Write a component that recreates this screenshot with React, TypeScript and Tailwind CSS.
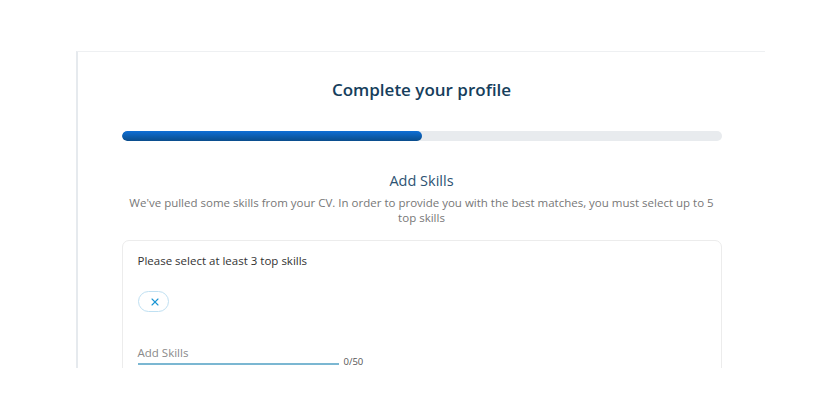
import { X } from "lucide-react";

export default function App() {
  return (
    <div className="h-[420px] w-[840px] bg-white pt-[51px] font-['Open_Sans',sans-serif]">
      <section className="ml-[76px] h-[317px] w-[689px] overflow-hidden border-l-2 border-t border-l-[#e6eaee] border-t-[#eef0f2]">
        <h1 className="m-0 mt-[26px] text-center text-[17px] font-semibold leading-6 text-[#163e5c]">
          Complete your profile
        </h1>

        <div className="mx-auto mt-[29px] h-[10px] w-[600px] overflow-hidden rounded-full bg-[#e8ebee]">
          <div className="h-full w-1/2 rounded-full bg-gradient-to-b from-[#0f6fd6] to-[#0a4d8c]" />
        </div>

        <h2 className="m-0 mt-[30px] text-center text-[14.5px] font-normal leading-5 text-[#2d5373]">
          Add Skills
        </h2>
        <p className="mx-auto m-0 mt-[4px] w-[600px] text-center text-[11.5px] leading-[15px] text-[#777]">
          We&apos;ve pulled some skills from your CV. In order to provide you with the best matches, you
          must select up to 5 top skills
        </p>

        <div className="mx-auto mt-[15px] h-[200px] w-[600px] rounded-[7px] border border-[#ececec] px-[15px] pt-[12px]">
          <div className="text-[11.5px] leading-4 text-[#333]">Please select at least 3 top skills</div>

          <button
            type="button"
            className="mt-[22px] flex h-[21px] w-[31px] items-center justify-end rounded-full border border-[#bfe0f2] pr-[7px] text-[#1b96d4]"
          >
            <X size={12} strokeWidth={2.25} />
          </button>

          <div className="mt-[33px] flex items-end gap-[5px]">
            <div className="w-[201px] border-b-2 border-[#7bb7d2] pb-[2px] text-[11.5px] leading-4 text-[#8a8a8a]">
              Add Skills
            </div>
            <span className="mb-[-4px] text-[9.5px] text-[#555]">0/50</span>
          </div>
        </div>
      </section>
    </div>
  );
}
